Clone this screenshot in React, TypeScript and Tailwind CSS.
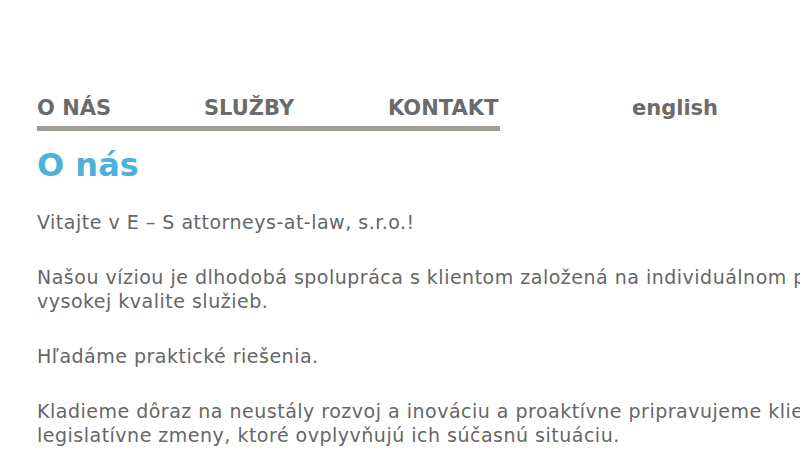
export default function App() {
  const body = "font-['DejaVu_Sans',sans-serif] text-[19px] leading-[24px] tracking-[0.5px] text-[#666666] whitespace-nowrap";
  return (
    <div className="bg-white w-[800px] h-[450px] overflow-hidden">
      <div className="pl-[37px] pt-[94px] w-[1000px]">
        <nav className="flex items-start font-['DejaVu_Sans',sans-serif] font-bold text-[21px] leading-[28px] text-[#6b6b6b]">
          <div className="flex w-[463px] border-b-[5px] border-[#a19b95] pb-[4px]">
            <a className="w-[167px]">O NÁS</a>
            <a className="w-[184px]">SLUŽBY</a>
            <a>KONTAKT</a>
          </div>
          <a className="ml-[132px]">english</a>
        </nav>
        <h1 className="mt-[16px] font-['DejaVu_Sans',sans-serif] font-bold text-[32px] leading-[36px] text-[#4cb2dc]">O nás</h1>
        <div className="mt-[27px] flex flex-col gap-[31px]">
          <p className={body}>Vitajte v E – S attorneys-at-law, s.r.o.!</p>
          <p className={body}>
            Našou víziou je dlhodobá spolupráca s klientom založená na individuálnom prístupe a<br />
            vysokej kvalite služieb.
          </p>
          <p className={body}>Hľadáme praktické riešenia.</p>
          <p className={body}>
            Kladieme dôraz na neustály rozvoj a inováciu a proaktívne pripravujeme klientov na<br />
            legislatívne zmeny, ktoré ovplyvňujú ich súčasnú situáciu.
          </p>
        </div>
      </div>
    </div>
  );
}
